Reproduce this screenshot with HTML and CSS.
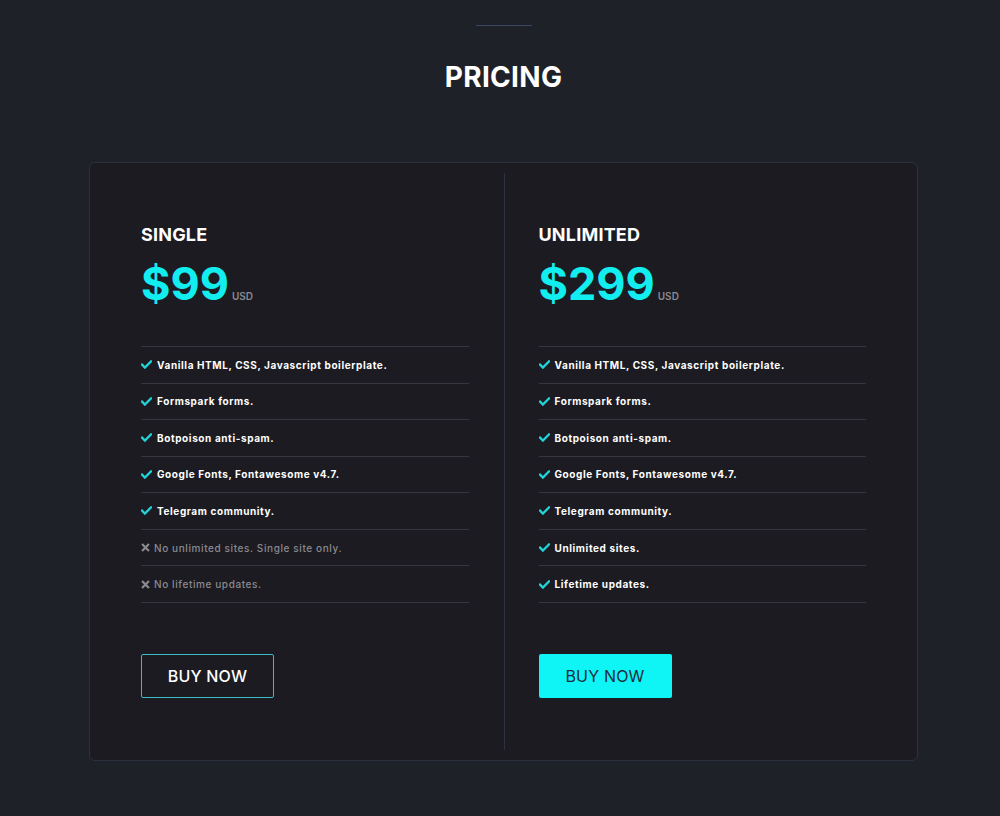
FILE: index.html
```html
<!DOCTYPE html>
<html lang="en">
<head>
<meta charset="utf-8">
<title>Pricing</title>
<link rel="stylesheet" href="styles.css">
</head>
<body>
<main class="page">
  <div class="rule"></div>
  <h1 class="title">PRICING</h1>
  <section class="card">
    <div class="plan plan-left">
      <h2 class="plan-name">SINGLE</h2>
      <div class="price"><span class="amount">$99</span><span class="cur">USD</span></div>
      <ul class="features">
        <li class="yes"><svg class="ic" viewBox="0 0 12 10"><path d="M1 5.2l3.2 3.2L11 1.6" /></svg>Vanilla HTML, CSS, Javascript boilerplate.</li>
        <li class="yes"><svg class="ic" viewBox="0 0 12 10"><path d="M1 5.2l3.2 3.2L11 1.6" /></svg>Formspark forms.</li>
        <li class="yes"><svg class="ic" viewBox="0 0 12 10"><path d="M1 5.2l3.2 3.2L11 1.6" /></svg>Botpoison anti-spam.</li>
        <li class="yes"><svg class="ic" viewBox="0 0 12 10"><path d="M1 5.2l3.2 3.2L11 1.6" /></svg>Google Fonts, Fontawesome v4.7.</li>
        <li class="yes"><svg class="ic" viewBox="0 0 12 10"><path d="M1 5.2l3.2 3.2L11 1.6" /></svg>Telegram community.</li>
        <li class="no"><svg class="ic ic-x" viewBox="0 0 10 10"><path d="M2 2l6 6M8 2L2 8" /></svg>No unlimited sites. Single site only.</li>
        <li class="no"><svg class="ic ic-x" viewBox="0 0 10 10"><path d="M2 2l6 6M8 2L2 8" /></svg>No lifetime updates.</li>
      </ul>
      <a class="btn btn-outline" href="#">BUY NOW</a>
    </div>
    <div class="plan plan-right">
      <h2 class="plan-name">UNLIMITED</h2>
      <div class="price"><span class="amount">$299</span><span class="cur">USD</span></div>
      <ul class="features">
        <li class="yes"><svg class="ic" viewBox="0 0 12 10"><path d="M1 5.2l3.2 3.2L11 1.6" /></svg>Vanilla HTML, CSS, Javascript boilerplate.</li>
        <li class="yes"><svg class="ic" viewBox="0 0 12 10"><path d="M1 5.2l3.2 3.2L11 1.6" /></svg>Formspark forms.</li>
        <li class="yes"><svg class="ic" viewBox="0 0 12 10"><path d="M1 5.2l3.2 3.2L11 1.6" /></svg>Botpoison anti-spam.</li>
        <li class="yes"><svg class="ic" viewBox="0 0 12 10"><path d="M1 5.2l3.2 3.2L11 1.6" /></svg>Google Fonts, Fontawesome v4.7.</li>
        <li class="yes"><svg class="ic" viewBox="0 0 12 10"><path d="M1 5.2l3.2 3.2L11 1.6" /></svg>Telegram community.</li>
        <li class="yes"><svg class="ic" viewBox="0 0 12 10"><path d="M1 5.2l3.2 3.2L11 1.6" /></svg>Unlimited sites.</li>
        <li class="yes"><svg class="ic" viewBox="0 0 12 10"><path d="M1 5.2l3.2 3.2L11 1.6" /></svg>Lifetime updates.</li>
      </ul>
      <a class="btn btn-solid" href="#">BUY NOW</a>
    </div>
  </section>
</main>
</body>
</html>
```
FILE: styles.css
```css
* { box-sizing: border-box; }
html, body { margin: 0; padding: 0; }
body {
  background: #1f2129;
  color: #fff;
  font-family: Inter, "Liberation Sans", Arial, sans-serif;
  height: 816px;
  overflow: hidden;
}
.page {
  padding: 25px 82px 0 89px;
  display: flex;
  flex-direction: column;
  align-items: center;
}
.rule {
  width: 56px;
  height: 1px;
  background: #3a4866;
}
.title {
  margin: 34px 0 0;
  font-size: 28px;
  line-height: 34px;
  font-weight: 700;
  letter-spacing: 0.3px;
  color: #fff;
}
.card {
  margin-top: 68px;
  width: 100%;
  background: #1b1b21;
  border: 1px solid #2c3140;
  border-radius: 6px;
  padding: 10px;
  display: grid;
  grid-template-columns: 1fr 1fr;
}
.plan {
  padding: 51px 35px 52px 41px;
}
.plan-right {
  border-left: 1px solid #2c3140;
  padding: 51px 41px 52px 34px;
}
.plan-name {
  margin: 0;
  font-size: 18px;
  line-height: 22px;
  font-weight: 700;
  letter-spacing: 0.2px;
  color: #fff;
}
.price {
  margin-top: 12px;
  display: flex;
  align-items: baseline;
}
.amount {
  font-size: 45px;
  line-height: 52px;
  font-weight: 700;
  color: #12eef0;
}
.cur {
  margin-left: 3px;
  font-size: 10px;
  font-weight: 600;
  color: #8a8a90;
}
.features {
  list-style: none;
  margin: 36px 0 0;
  padding: 0;
  border-top: 1px solid #343740;
}
.features li {
  height: 36.55px;
  display: flex;
  align-items: center;
  border-bottom: 1px solid #343740;
  font-size: 10px;
  font-weight: 700;
  letter-spacing: 0.6px;
  color: #fff;
}
.features li.no {
  color: #8a8a90;
  font-weight: 500;
}
.ic {
  width: 11px;
  height: 9px;
  margin-right: 5px;
  fill: none;
  stroke: #22d3d8;
  stroke-width: 2.6;
  stroke-linecap: square;
}
.ic-x {
  width: 9px;
  height: 9px;
  margin-right: 4px;
  stroke: #8a8a90;
  stroke-width: 2.4;
}
.btn {
  margin-top: 51px;
  display: inline-flex;
  align-items: center;
  justify-content: center;
  width: 133px;
  height: 44px;
  border-radius: 2px;
  font-size: 16px;
  font-weight: 500;
  text-decoration: none;
  letter-spacing: 0.2px;
}
.btn-outline {
  border: 1px solid #3cbcc4;
  color: #fff;
}
.btn-solid {
  background: #0ff4f4;
  color: #1d2c3c;
  font-weight: 400;
}
```
